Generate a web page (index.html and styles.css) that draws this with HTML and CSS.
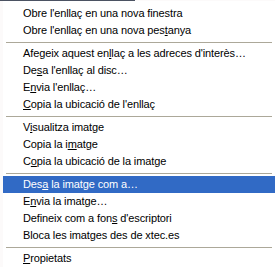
FILE: index.html
```html
<!DOCTYPE html>
<html lang="ca">
<head>
  <meta charset="UTF-8">
  <meta name="viewport" content="width=device-width, initial-scale=1.0">
  <title>Menú contextual</title>
  <link rel="stylesheet" href="styles.css">
</head>
<body>
  <div class="page-edge"></div>
  <ul class="menu">
    <li class="item">Obre l'enllaç en una nova finestra</li>
    <li class="item">Obre l'enllaç en una nova pes<u>t</u>anya</li>
    <li class="sep"></li>
    <li class="item">Afegeix aquest en<u>l</u>laç a les adreces d'interès…</li>
    <li class="item">De<u>s</u>a l'enllaç al disc…</li>
    <li class="item">E<u>n</u>via l'enllaç…</li>
    <li class="item"><u>C</u>opia la ubicació de l'enllaç</li>
    <li class="sep"></li>
    <li class="item">V<u>i</u>sualitza imatge</li>
    <li class="item">Copia la i<u>m</u>atge</li>
    <li class="item">C<u>o</u>pia la ubicació de la imatge</li>
    <li class="sep"></li>
    <li class="item active">Des<u>a</u> la imatge com a…</li>
    <li class="item">E<u>n</u>via la imatge…</li>
    <li class="item">Defineix com a fon<u>s</u> d'escriptori</li>
    <li class="item">Bloca les imatges des de xtec.es</li>
    <li class="sep"></li>
    <li class="item"><u>P</u>ropietats</li>
  </ul>
</body>
</html>
```

FILE: styles.css
```css
body {
  margin: 0;
  background: #fcfafa;
  font-family: "Liberation Sans", Arial, sans-serif;
  font-size: 11px;
  letter-spacing: -0.12px;
  color: #000;
  overflow: hidden;
}
.page-edge {
  width: 135px;
  height: 1px;
  background: #4b5262;
}
.menu {
  list-style: none;
  margin: 0 0 0 3px;
  padding: 4px 0 0;
  background: #fff;
}
.item {
  height: 17px;
  line-height: 17px;
  padding-left: 20px;
  white-space: nowrap;
}
.item.active {
  background: #316ac5;
  color: #fff;
}
.sep {
  height: 6px;
  box-sizing: border-box;
  padding: 3px 3px 0;
}
.sep::after {
  content: "";
  display: block;
  height: 1px;
  background: #aca899;
}
```
